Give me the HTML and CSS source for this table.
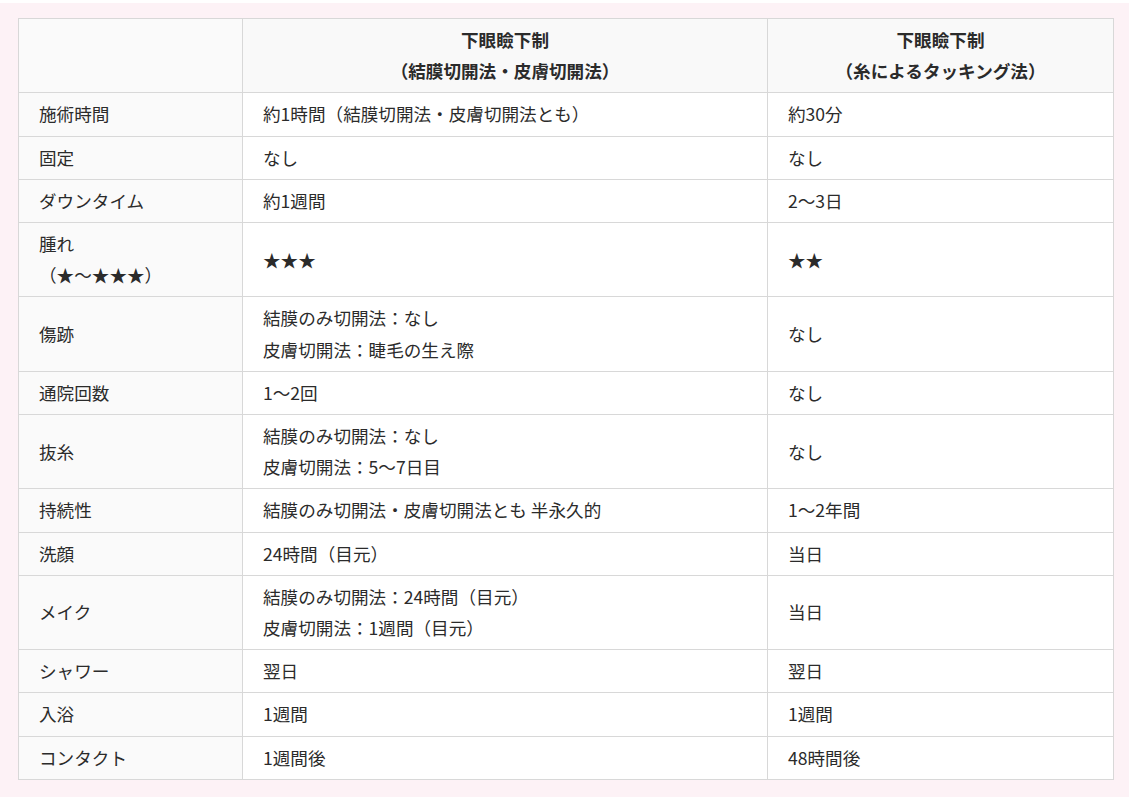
FILE: index.html
```html
<!DOCTYPE html>
<html lang="ja">
<head>
<meta charset="utf-8">
<title>下眼瞼下制 比較表</title>
<link rel="stylesheet" href="styles.css">
</head>
<body>
<div class="wrap">
  <table class="cmp">
    <colgroup>
      <col class="c1"><col class="c2"><col class="c3">
    </colgroup>
    <thead>
      <tr>
        <th class="corner"></th>
        <th>下眼瞼下制<br>（結膜切開法・皮膚切開法）</th>
        <th>下眼瞼下制<br>（糸によるタッキング法）</th>
      </tr>
    </thead>
    <tbody>
      <tr><th>施術時間</th><td>約1時間（結膜切開法・皮膚切開法とも）</td><td>約30分</td></tr>
      <tr><th>固定</th><td>なし</td><td>なし</td></tr>
      <tr><th>ダウンタイム</th><td>約1週間</td><td>2〜3日</td></tr>
      <tr><th>腫れ<br>（★〜★★★）</th><td>★★★</td><td>★★</td></tr>
      <tr><th>傷跡</th><td>結膜のみ切開法：なし<br>皮膚切開法：睫毛の生え際</td><td>なし</td></tr>
      <tr><th>通院回数</th><td>1〜2回</td><td>なし</td></tr>
      <tr><th>抜糸</th><td>結膜のみ切開法：なし<br>皮膚切開法：5〜7日目</td><td>なし</td></tr>
      <tr><th>持続性</th><td>結膜のみ切開法・皮膚切開法とも 半永久的</td><td>1〜2年間</td></tr>
      <tr><th>洗顔</th><td>24時間（目元）</td><td>当日</td></tr>
      <tr><th>メイク</th><td>結膜のみ切開法：24時間（目元）<br>皮膚切開法：1週間（目元）</td><td>当日</td></tr>
      <tr><th>シャワー</th><td>翌日</td><td>翌日</td></tr>
      <tr><th>入浴</th><td>1週間</td><td>1週間</td></tr>
      <tr><th>コンタクト</th><td>1週間後</td><td>48時間後</td></tr>
    </tbody>
  </table>
</div>
</body>
</html>
```

FILE: styles.css
```css
html, body {
  margin: 0;
  padding: 0;
  background: #ffffff;
}
body {
  font-family: "Noto Sans CJK JP", "Noto Sans", sans-serif;
  color: #2b2b2b;
}
.wrap {
  width: 1129px;
  box-sizing: border-box;
  margin-top: 3px;
  background: #fdf2f6;
  padding: 15px 16px 17px 18px;
}
.cmp {
  width: 1095px;
  border-collapse: collapse;
  table-layout: fixed;
  font-size: 17.6px;
  line-height: 31.2px;
  background: #ffffff;
}
.c1 { width: 224px; }
.c2 { width: 525px; }
.c3 { width: 346px; }
.cmp th,
.cmp td {
  border: 1px solid #d8d8d8;
  padding: 5px 20px 6px;
  text-align: left;
  vertical-align: middle;
  font-weight: normal;
}
.cmp tbody th {
  background: #fafafa;
}
.cmp thead th {
  background: #f9f9f9;
  text-align: center;
  font-weight: bold;
}
.cmp thead th.corner {
  background: #fafafa;
}
.cmp td {
  background: #ffffff;
}
```
